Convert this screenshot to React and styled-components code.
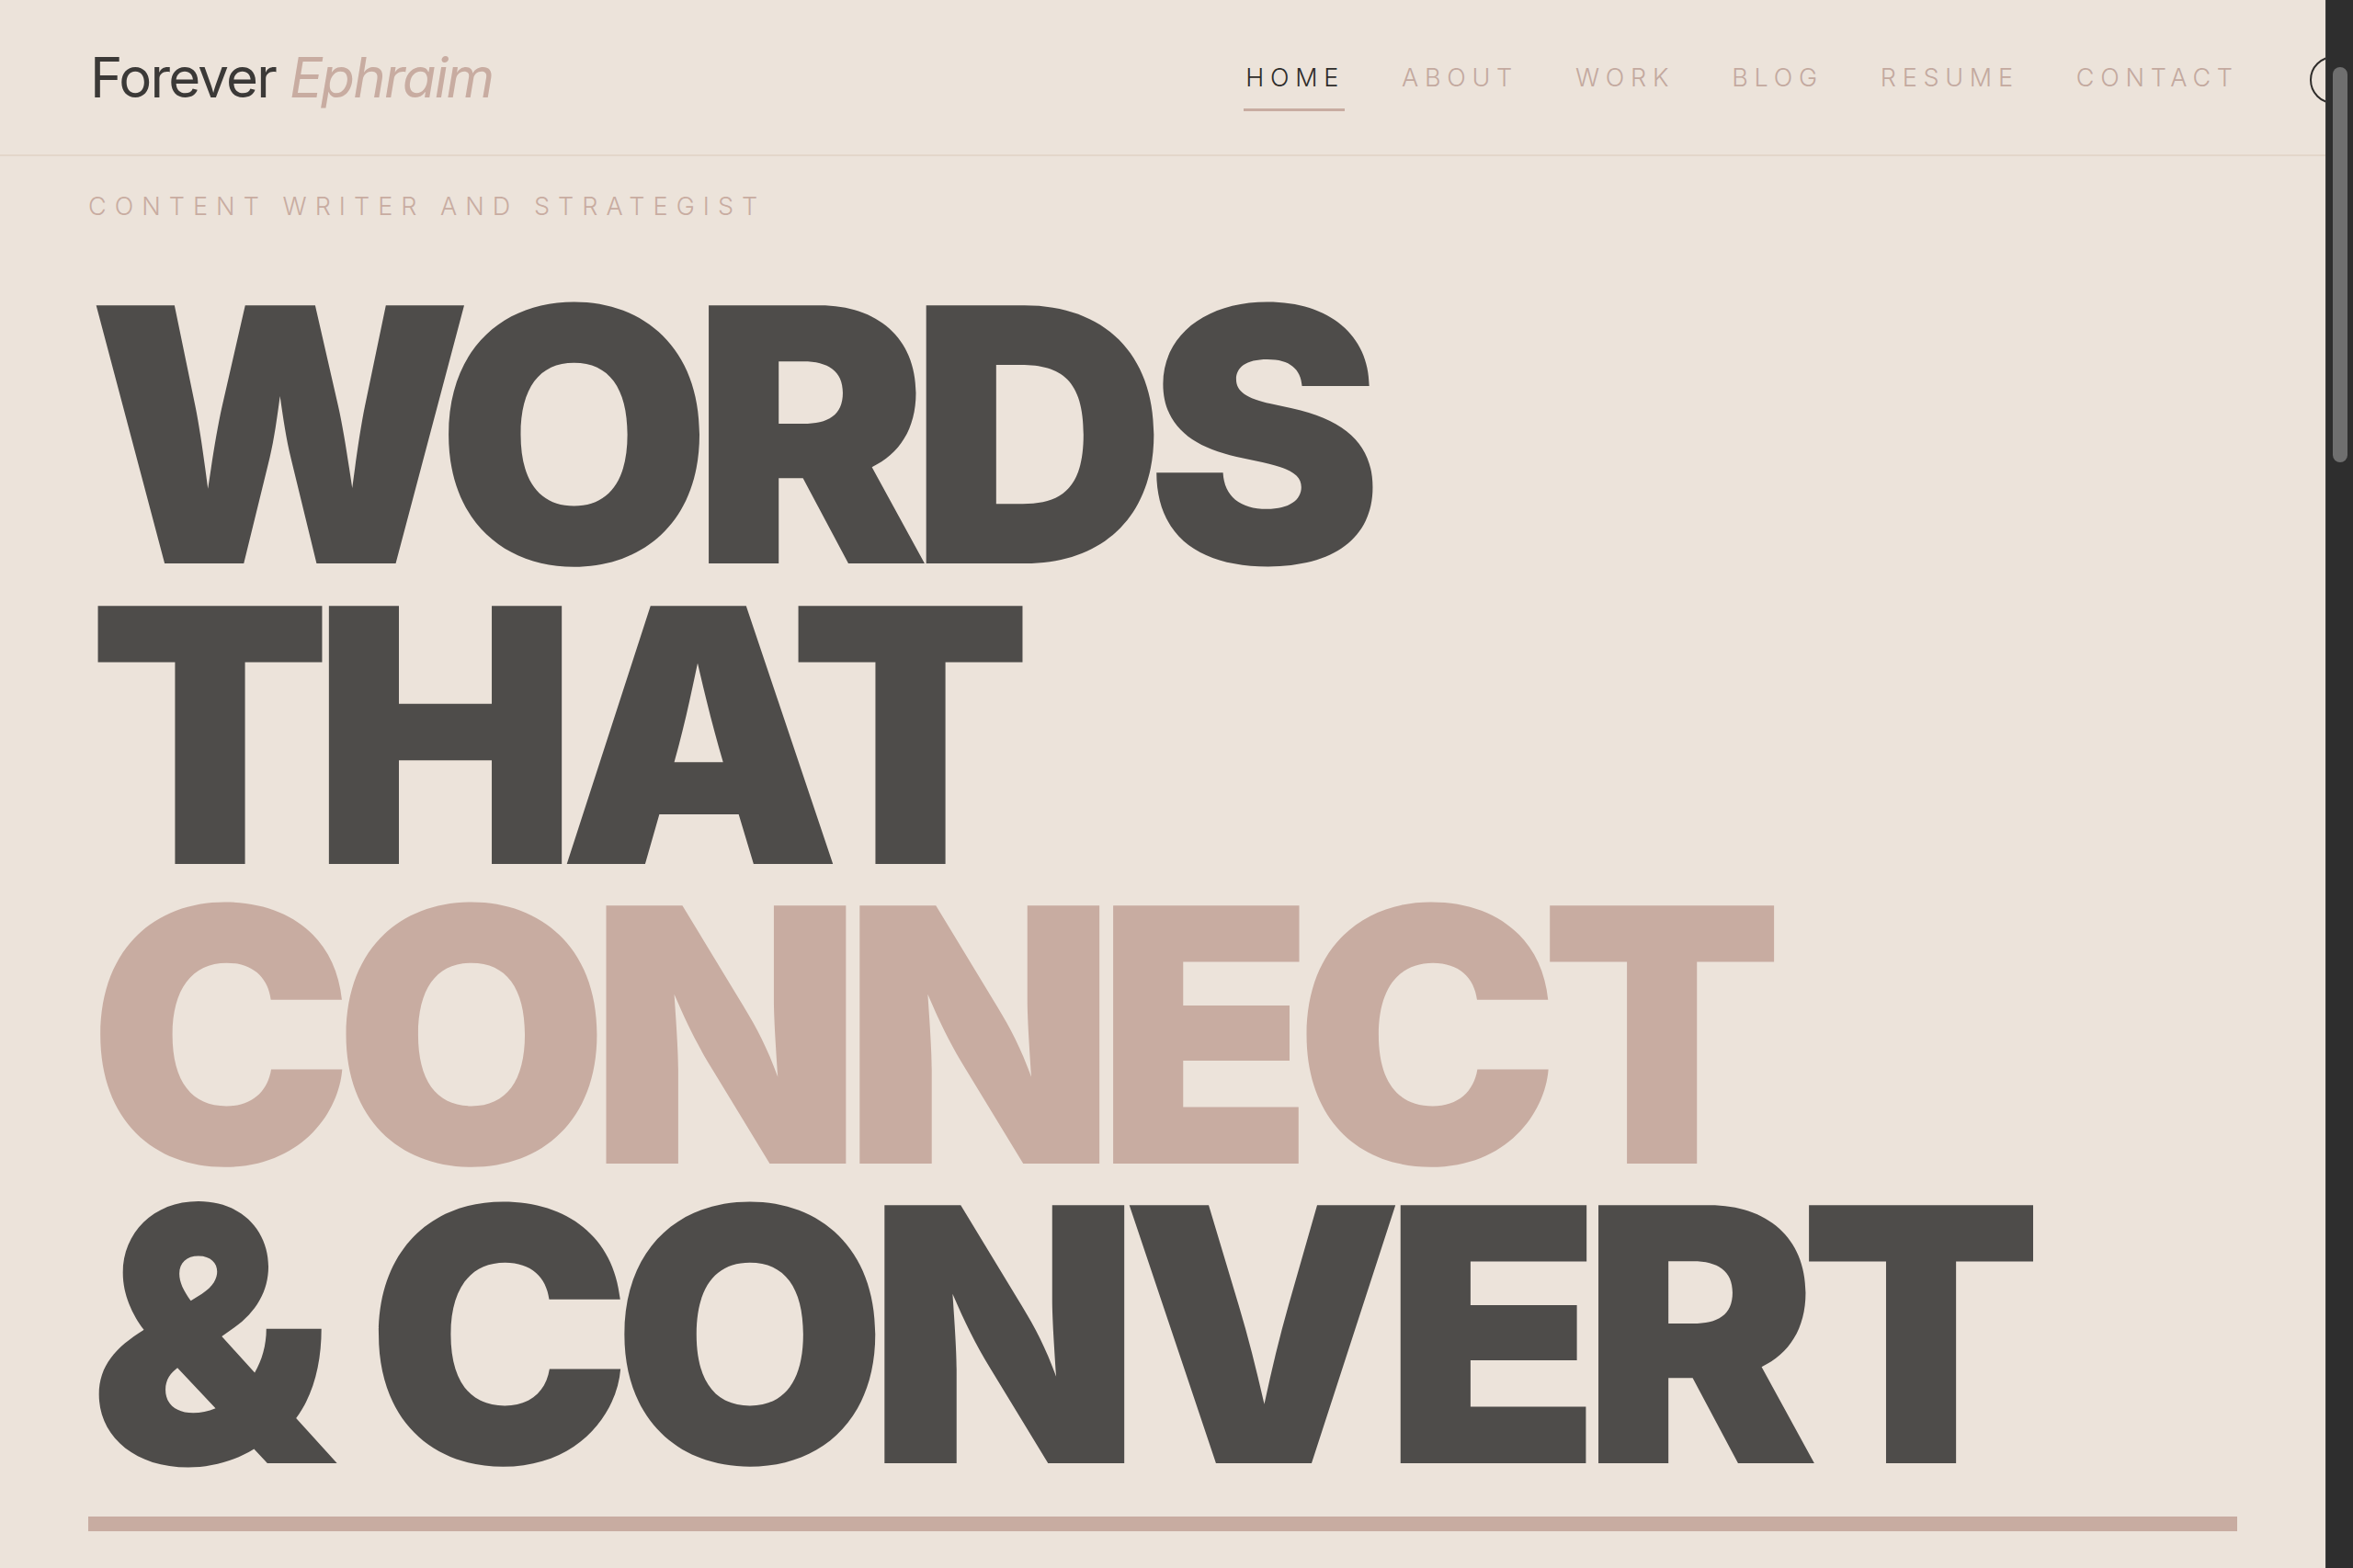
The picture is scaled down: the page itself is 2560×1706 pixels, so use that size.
import React from 'react';
import styled, { createGlobalStyle } from 'styled-components';

const GlobalStyle = createGlobalStyle`
  html, body {
    margin: 0;
    background: #ece3da;
  }
  body {
    font-family: Inter, "Noto Sans", "Liberation Sans", sans-serif;
    color: #4e4c4a;
  }
`;

const Window = styled.div`
  display: flex;
  height: 100vh;
  overflow: hidden;
`;

const Page = styled.div`
  flex: 1;
  min-width: 0;
  overflow: hidden;
`;

/* the browser's dark scrollbar, as it shows in the shot */
const ScrollTrack = styled.div`
  width: 29px;
  flex-shrink: 0;
  background: #2e2e2e;
  border-left: 1px solid #3c3c3c;
  padding-top: 73px;
`;

const ScrollThumb = styled.div`
  width: 16px;
  height: 430px;
  margin-left: 7px;
  border-radius: 8px;
  background: #6f6f6f;
`;

const Header = styled.header`
  height: 170px;
  border-bottom: 2px solid #e3d6ca;
  box-sizing: border-box;
  padding: 0 96px;
  display: flex;
  align-items: center;
  justify-content: space-between;
`;

const Logo = styled.a`
  font-size: 60px;
  letter-spacing: -0.03em;
  color: #3b3937;
  text-decoration: none;
  white-space: nowrap;
  margin-left: 2px;

  em {
    color: #c8aca1;
    font-style: italic;
  }
`;

const NavRow = styled.div`
  display: flex;
  align-items: center;
  gap: 84px;
  margin-right: -131px;
`;

const Nav = styled.nav`
  display: flex;
  gap: 62px;
`;

const NavLink = styled.a`
  position: relative;
  font-size: 27px;
  font-weight: 300;
  letter-spacing: 0.25em;
  text-transform: uppercase;
  text-decoration: none;
  color: ${p => (p.$active ? '#2f2d2b' : '#c3a99f')};

  &::after {
    content: '';
    display: ${p => (p.$active ? 'block' : 'none')};
    position: absolute;
    left: -2px;
    right: 0;
    bottom: -20px;
    height: 3px;
    background: #c8aca1;
  }

  &:last-child {
    margin-right: -0.25em;
  }
`;

const ThemeToggle = styled.button`
  width: 52px;
  height: 52px;
  border-radius: 50%;
  border: 2px solid #2f2d2b;
  background: transparent;
  flex-shrink: 0;
  margin-top: 6px;
`;

const Hero = styled.main`
  padding: 39px 96px 0;
`;

const Eyebrow = styled.p`
  margin: 0;
  font-size: 27px;
  font-weight: 300;
  line-height: 1.2;
  letter-spacing: 0.335em;
  color: #c8aca1;
  text-transform: uppercase;
`;

const Headline = styled.h1`
  margin: 69px 0 0;
  font-size: 386px;
  font-weight: 900;
  line-height: 0.845;
  letter-spacing: -0.055em;
  color: #4e4c4a;
  text-transform: uppercase;
`;

const Line = styled.span`
  display: block;
  color: ${p => (p.$accent ? '#c8aca1' : 'inherit')};
`;

const Rule = styled.div`
  margin-top: 35px;
  height: 16px;
  background: #c8aca1;
`;

const links = ['Home', 'About', 'Work', 'Blog', 'Resume', 'Contact'];

export default function App() {
  return (
    <Window>
      <GlobalStyle />
      <Page>
        <Header>
          <Logo href="#">
            Forever <em>Ephraim</em>
          </Logo>
          <NavRow>
            <Nav>
              {links.map((l, i) => (
                <NavLink key={l} href="#" $active={i === 0}>
                  {l}
                </NavLink>
              ))}
            </Nav>
            <ThemeToggle aria-label="Toggle theme" />
          </NavRow>
        </Header>
        <Hero>
          <Eyebrow>Content writer and strategist</Eyebrow>
          <Headline>
            <Line>Words</Line>
            <Line>That</Line>
            <Line $accent>Connect</Line>
            <Line>&amp; Convert</Line>
          </Headline>
          <Rule />
        </Hero>
      </Page>
      <ScrollTrack>
        <ScrollThumb />
      </ScrollTrack>
    </Window>
  );
}
